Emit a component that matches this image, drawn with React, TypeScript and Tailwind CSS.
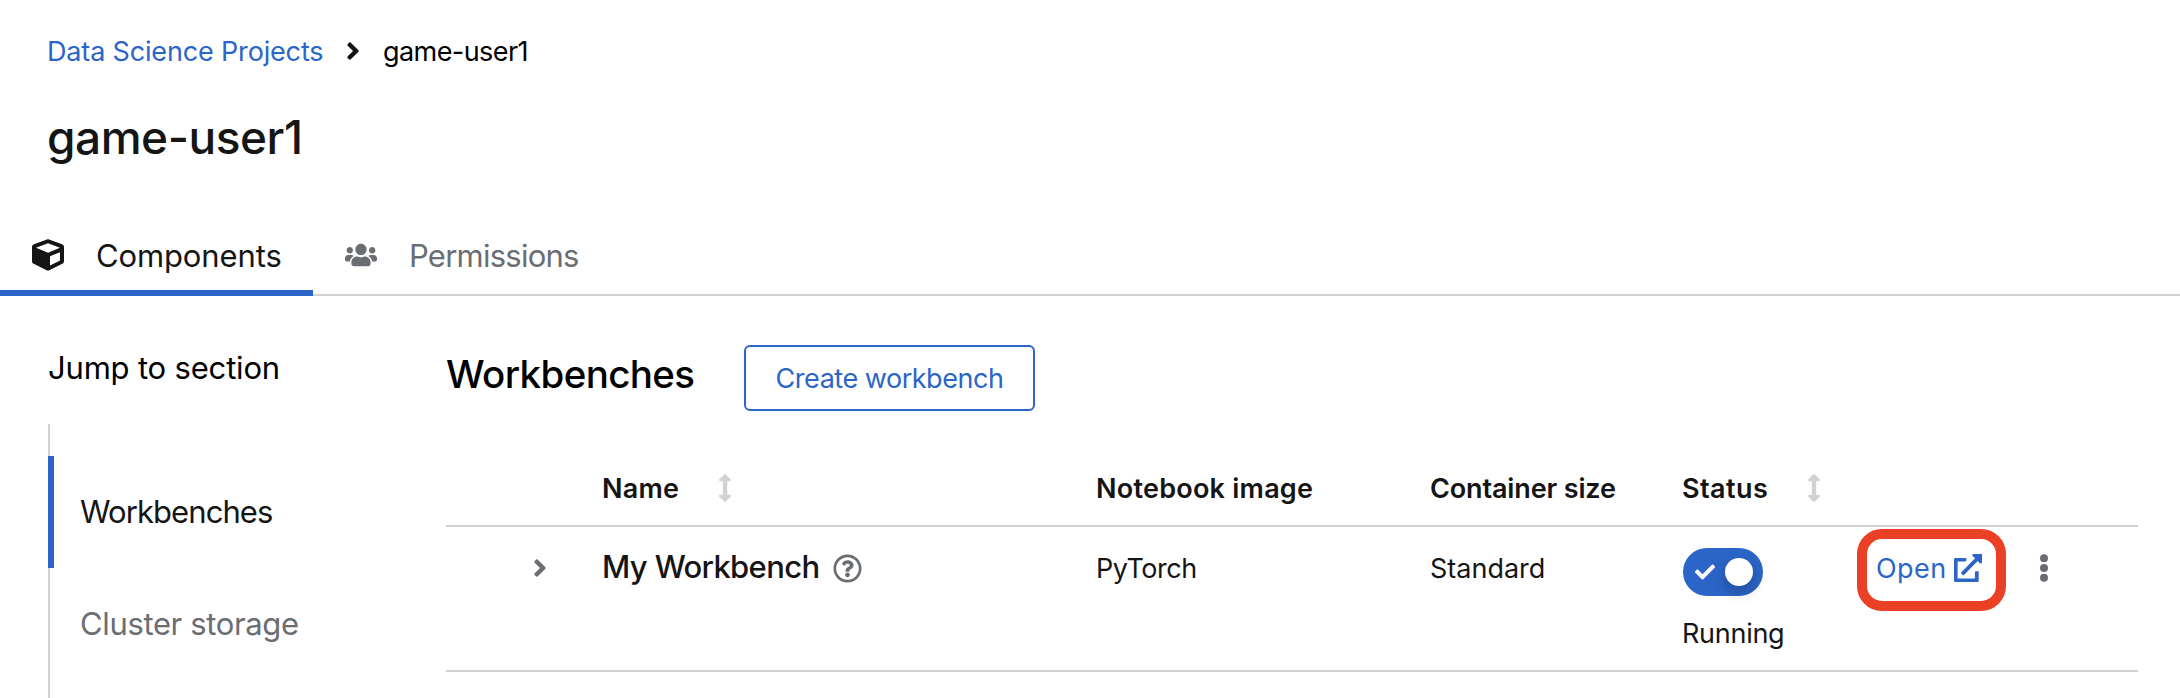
import React from "react";
import { FaAngleRight, FaCheck, FaCube, FaRegQuestionCircle, FaUsers } from "react-icons/fa";

function SortIcon() {
  return (
    <svg className="h-7 w-3 shrink-0" viewBox="0 0 12 28" fill="#d2d2d2">
      <path d="M5.2.5a1.1 1.1 0 0 1 1.6 0l4.9 4.8c.7.7.2 1.9-.8 1.9H8.200v13.600h2.700c1 0 1.500 1.200.8 1.900l-4.900 4.800a1.100 1.100 0 0 1-1.600 0L.3 22.700c-.7-.7-.2-1.900.8-1.900H3.800V7.200H1.100c-1 0-1.500-1.200-.8-1.900z" />
    </svg>
  );
}

function ExternalLinkIcon() {
  return (
    <svg className="h-7 w-7 shrink-0" viewBox="0 0 28 28" fill="#2b65c7">
      <path d="M12.3 4v2.5l-.9.9H3.6v17.1h17.3v-6.400l.9-.9h2.900v9.200c0 .9-.7 1.600-1.600 1.600H1.600C.7 28 0 27.300 0 26.400V5.600C0 4.700.7 4 1.600 4z" />
      <path d="M18.500 0H28v9.300l-2.200-.1-2.100-2.300L10 20.900a1 1 0 0 1-1.400 0L7.300 19.600a1 1 0 0 1 0-1.400L21.100 4.300 18.500 2z" />
    </svg>
  );
}

function KebabIcon() {
  return (
    <svg className="h-7 w-2" viewBox="0 0 8 28" fill="#6a6e73">
      <circle cx="4" cy="4.2" r="4" />
      <circle cx="4" cy="14" r="4" />
      <circle cx="4" cy="23.8" r="4" />
    </svg>
  );
}

const columns = "grid grid-cols-[157px_494px_334px_252px_193px_164px_1fr] border-b-2 border-[#d2d2d2] text-[27px] leading-10";

export default function App() {
  return (
    <div className="flex h-[698px] w-full flex-col overflow-hidden bg-white font-['Inter',sans-serif] whitespace-nowrap text-[#151515]">
      <header className="flex flex-col pt-8">
        <nav className="flex h-10 items-center pl-[47px] text-[27px] leading-10">
          <a className="w-[292px] tracking-[-0.006em] text-[#2b65c7]">Data Science Projects</a>
          <FaAngleRight className="-mt-0.5 h-7 w-7 text-[#151515]" />
          <span className="ml-4 tracking-[-0.021em] text-black">game-user1</span>
        </nav>
        <h1 className="mt-[35px] h-[60px] pl-[47px] text-[46px] leading-[60px] font-[550] tracking-[-0.01em]">game-user1</h1>
      </header>

      <div className="mt-[51px] flex h-[78px] shrink-0 text-[31px] leading-[75px]">
        <div className="flex w-[313px] border-b-6 border-[#2b65c7] pl-8">
          <FaCube className="mt-[21px] h-8 w-8 shrink-0" />
          <span className="ml-8 tracking-[-0.004em]">Components</span>
        </div>
        <div className="flex flex-1 border-b-2 border-[#d2d2d2] pl-8 text-[#6a6e73]">
          <FaUsers className="mt-[21px] h-8 w-8 shrink-0" />
          <span className="ml-8 tracking-[-0.0247em]">Permissions</span>
        </div>
      </div>

      <main className="flex min-h-0 flex-1">
        <aside className="flex w-[446px] shrink-0 flex-col pt-[52px] pl-12 text-[31px]">
          <div className="h-10 leading-10 tracking-[-0.006em] text-black">Jump to section</div>
          <ul className="mt-9 flex-1 border-l-2 border-[#d2d2d2] pt-8 leading-[112px]">
            <li className="-ml-0.5 h-28 border-l-6 border-[#2b65c7] pl-[26px] tracking-[-0.0297em]">Workbenches</li>
            <li className="h-28 pl-[30px] tracking-[-0.0116em] text-[#6a6e73]">Cluster storage</li>
          </ul>
        </aside>

        <section className="w-[1692px] pt-[49px]">
          <div className="flex h-[66px]">
            <h2 className="w-[298px] text-[38.5px] leading-[58px] font-[550] tracking-[-0.016em] text-black">Workbenches</h2>
            <button className="h-[66px] w-[291px] rounded-md border-2 border-[#2b65c7] pt-0.5 text-[27px] tracking-[-0.0175em] text-[#2b65c7]">
              Create workbench
            </button>
          </div>

          <div className={`${columns} mt-10 h-[76px] items-center font-semibold`}>
            <div className="col-start-2 flex items-center">
              <span className="-ml-px w-[117px] pt-0.5 tracking-[0.0085em]">Name</span>
              <SortIcon />
            </div>
            <div className="-ml-px pt-0.5 tracking-[0.009em]">Notebook image</div>
            <div className="-ml-px pt-0.5 tracking-[-0.0051em]">Container size</div>
            <div className="flex items-center">
              <span className="-ml-px w-[126px] pt-0.5 tracking-[0.0164em]">Status</span>
              <SortIcon />
            </div>
          </div>

          <div className={`${columns} h-[145px] items-start pt-[21px]`}>
            <div className="flex h-10 items-center pl-20">
              <FaAngleRight className="h-7 w-7 text-[#6a6e73]" />
            </div>
            <div className="flex h-10 items-center">
              <span className="-mt-[3px] -ml-px w-[231px] text-[31px] font-medium tracking-[-0.021em]">My Workbench</span>
              <FaRegQuestionCircle className="h-[29px] w-[29px] text-[#6a6e73]" />
            </div>
            <div className="-ml-px pt-px tracking-[-0.018em]">PyTorch</div>
            <div className="-ml-px pt-px">Standard</div>
            <div className="flex flex-col">
              <div className="flex h-12 w-20 items-center justify-between rounded-full bg-[#2b65c7] pr-2.5 pl-3">
                <FaCheck className="h-5 w-5 text-white" />
                <span className="h-7 w-7 rounded-full bg-white shadow-[0_6px_14px_rgba(0,0,0,0.25)]" />
              </div>
              <span className="mt-[18px] -ml-px tracking-[-0.01em]">Running</span>
            </div>
            <div className="relative flex h-10 items-center">
              <a className="w-[78px] pt-0.5 tracking-[0.015em] text-[#2b65c7]">Open</a>
              <ExternalLinkIcon />
              <span className="absolute -top-[19px] -left-[19px] h-[82px] w-[149px] rounded-[25px] border-10 border-[#ea4025]" />
            </div>
            <div className="flex h-10 items-center">
              <KebabIcon />
            </div>
          </div>
        </section>
      </main>
    </div>
  );
}
